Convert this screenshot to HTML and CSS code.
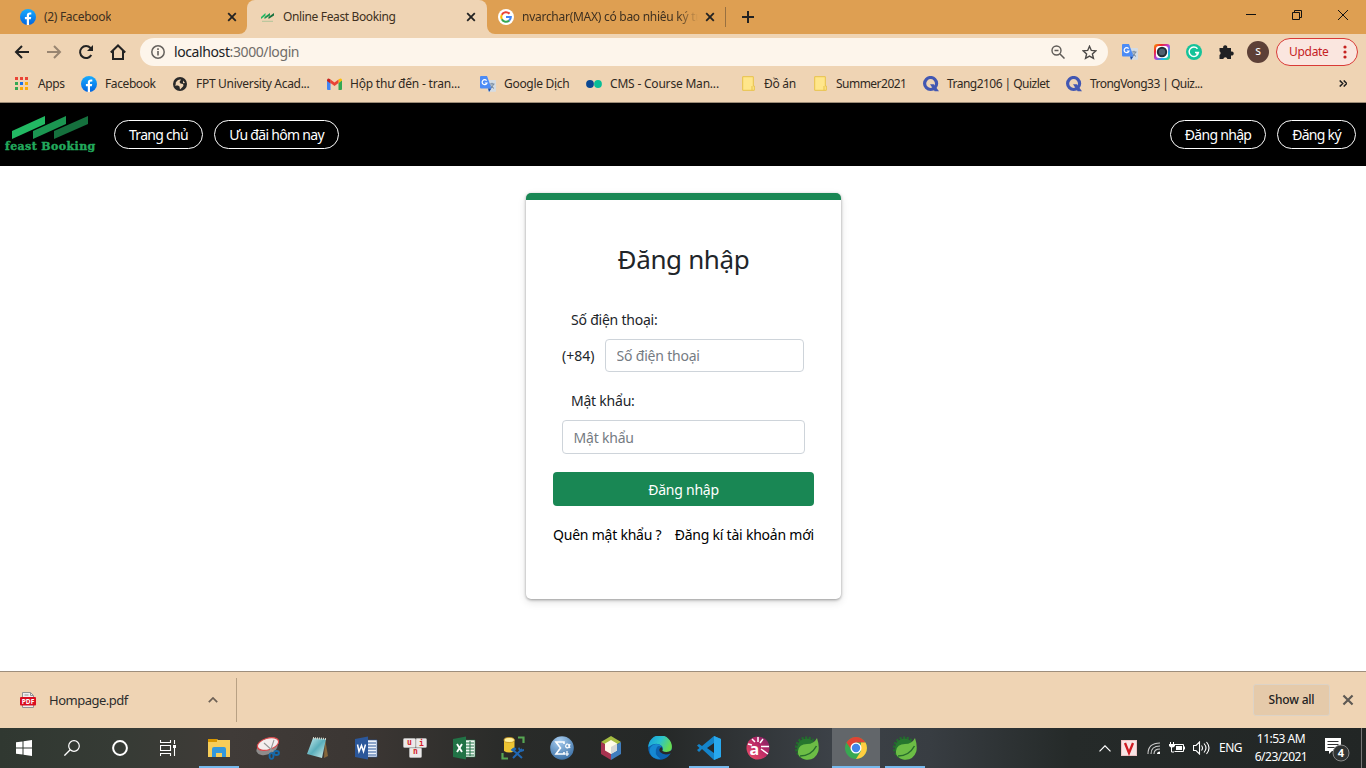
FILE: index.html
```html
<!DOCTYPE html>
<html lang="vi">
<head>
<meta charset="utf-8">
<title>Online Feast Booking</title>
<link rel="stylesheet" href="styles.css">
</head>
<body>
<svg class="defs" aria-hidden="true">
  <defs>
    <linearGradient id="fbg" x1="0" y1="0" x2="0" y2="1"><stop offset="0" stop-color="#18acfe"/><stop offset="1" stop-color="#0165e1"/></linearGradient>
    <linearGradient id="rain" x1="0" y1="0" x2="1" y2="1"><stop offset="0" stop-color="#f5a500"/><stop offset=".25" stop-color="#f6252f"/><stop offset=".5" stop-color="#b63bd8"/><stop offset=".75" stop-color="#18b8f0"/><stop offset="1" stop-color="#38de52"/></linearGradient>
    <linearGradient id="edge" x1="0" y1="0" x2="1" y2=".4"><stop offset="0" stop-color="#1499df"/><stop offset=".55" stop-color="#2bc3cd"/><stop offset="1" stop-color="#67dc52"/></linearGradient>
    <linearGradient id="pink" x1="0" y1="1" x2="1" y2="0"><stop offset="0" stop-color="#f15364"/><stop offset=".6" stop-color="#b62667"/><stop offset="1" stop-color="#712463"/></linearGradient>
    <linearGradient id="note" x1="0" y1="0" x2="1" y2="1"><stop offset="0" stop-color="#cceef0"/><stop offset=".5" stop-color="#5aaebb"/><stop offset="1" stop-color="#d8f1ee"/></linearGradient>
    <radialGradient id="sig" cx=".4" cy=".2" r=".9"><stop offset="0" stop-color="#a9cef0"/><stop offset="1" stop-color="#32689f"/></radialGradient>
    <symbol id="facebook" viewBox="0 0 16 16"><circle cx="8" cy="8" r="8" fill="url(#fbg)"/><path d="M6.8 16v-5.7H4.9V8h1.9V6.7c0-2.3 1.1-3.3 3.2-3.3l1.3.1v2h-1c-1 0-1.3.5-1.3 1.3V8h2.2l-.4 2.3H9V16z" fill="#fff"/></symbol>
    <symbol id="x" viewBox="0 0 10 10"><path d="M1.2 1.2l7.6 7.6M8.800 1.200L1.200 8.800" stroke="currentColor" stroke-width="1.8"/></symbol>
    <symbol id="mark" viewBox="0 0 76 24"><path d="M0 15L33 0v8L0 23z" fill="#22b963"/><path d="M21 15L54 0v8L21 23z" fill="#1b9651"/><path d="M42 15L76 0v8L42 23z" fill="#15703d"/></symbol>
    <symbol id="translate" viewBox="0 0 16 16"><path d="M6 4h9.300q.7 0 .7.700V15q0 .7-.7.700H8z" fill="#d5dce3"/><path d="M9.500 8h5M12 6.800V8m1.500 0q-.6 2.400-2.500 4m-.5-3q1 2 3.500 3.400" stroke="#71859b" fill="none"/><path d="M1 0h6l4.500 12.600H1q-1 0-1-1V1q0-1 1-1z" fill="#4c8bf5"/><path d="M8 12.600h3.400L9 16z" fill="#174ca8"/><path d="M6.600 4.600A2.500 2.500 0 1 0 7 7H4.800" fill="none" stroke="#fff" stroke-width="1.200"/></symbol>
    <symbol id="folder" viewBox="0 0 13 15"><path d="M.7.700h10.600v9.300h1v4.300H.7z" fill="#ffe68b" stroke="#e8c249"/><path d="M10 10v4.300" stroke="#e8c249"/></symbol>
    <symbol id="quizlet" viewBox="0 0 16 16"><circle cx="7.600" cy="7.500" r="6" fill="none" stroke="#4257b2" stroke-width="3.200"/><path d="M7 8.300h3.800l5.200 6.900h-4.300z" fill="#4257b2"/></symbol>
    <symbol id="spring" viewBox="0 0 24 24"><circle cx="11.500" cy="12" r="10.300" fill="none" stroke="#226d2d" stroke-width="2.600" stroke-dasharray="2.200 1.400"/><circle cx="11.500" cy="12" r="9.500" fill="#26762e"/><path d="M22 2q2.700 8 1.200 13.800Q20 25 10 23.500 2 21 3 15q1-7 9-7 7 0 10-6z" fill="#6cbd45"/><path d="M5 20q11 0 16.500-10" fill="none" stroke="#286e2d" stroke-width="1.500"/></symbol>
  </defs>
</svg>

<header class="tabs">
  <div class="tab tab-first"><svg class="i16"><use href="#facebook"/></svg><span class="tab-title t-fb">(2) Facebook</span><svg class="close"><use href="#x"/></svg></div>
  <div class="tab-shell"><div class="tab tab-active"><svg class="fav" viewBox="0 0 13 10"><path d="M0 5l4.500-4v2.500L0 7z" fill="#22b963"/><path d="M3.500 5L9 1v2.500L3.500 7z" fill="#1b9651"/><path d="M7.500 5L13 1v2.500L7.500 7z" fill="#15703d"/><path d="M1 9.300h11" stroke="#a8c295" stroke-width=".9"/></svg><span class="tab-title t-on">Online Feast Booking</span><svg class="close"><use href="#x"/></svg></div></div>
  <div class="tab-rest">
    <div class="tab tab-third"><svg class="i16" viewBox="0 0 16 16"><circle cx="8" cy="8" r="8" fill="#fff"/><g fill="none" stroke-width="2.100"><path d="M11.500 4.700A4.800 4.800 0 0 0 3.800 5.700" stroke="#ea4335"/><path d="M3.800 5.700a4.800 4.800 0 0 0 0 4.600" stroke="#fbbc05"/><path d="M3.800 10.300a4.800 4.800 0 0 0 7.300 1.300" stroke="#34a853"/><path d="M11.100 11.600A4.800 4.800 0 0 0 12.800 8H8" stroke="#4285f4"/></g></svg><span class="tab-title t-nv">nvarchar(MAX) có bao nhiêu ký tự</span><svg class="close"><use href="#x"/></svg></div>
    <svg class="newtab" viewBox="0 0 12 12"><path d="M6 0v12M0 6h12" stroke="#222" stroke-width="2"/></svg>
    <div class="winbtns"><svg viewBox="0 0 10 10"><path d="M0 4.500h10" stroke="#111"/></svg><svg viewBox="0 0 10 10"><path d="M.5 2.500h7v7h-7zM2.500 2V.5h7v7H8" fill="none" stroke="#111"/></svg><svg viewBox="0 0 10 10"><path d="M0 0l10 10M10 0L0 10" stroke="#111"/></svg></div>
  </div>
</header>

<div class="toolbar">
  <svg class="nav" viewBox="0 0 16 16"><path d="M15 8H2M8 2L2 8l6 6" fill="none" stroke="#222" stroke-width="2"/></svg>
  <svg class="nav" viewBox="0 0 16 16"><path d="M1 8h13M8 2l6 6-6 6" fill="none" stroke="#988571" stroke-width="2"/></svg>
  <svg class="nav" viewBox="0 0 16 16"><path d="M13.300 11A6 6 0 1 1 12.500 4L14 6" fill="none" stroke="#222" stroke-width="2"/><path d="M15 1v6H9z" fill="#222"/></svg>
  <svg class="nav" viewBox="0 0 16 16"><path d="M.8 8.500L8 1.500l7.200 7M3 7v8h10V7" fill="none" stroke="#222" stroke-width="2"/></svg>
  <div class="omnibox">
    <svg class="info" viewBox="0 0 14 14"><circle cx="7" cy="7" r="6.200" fill="none" stroke="#65615d" stroke-width="1.500"/><path d="M7 6v4.500M7 3.300v1.600" stroke="#65615d" stroke-width="1.600"/></svg>
    <span class="url">localhost<span>:3000/login</span></span>
    <svg class="mag" viewBox="0 0 14 14"><circle cx="5.500" cy="5.500" r="4.500" fill="none" stroke="#5f5b57" stroke-width="1.400"/><path d="M9 9l4.500 4.500M3.500 5.500h4" stroke="#5f5b57" stroke-width="1.500"/></svg>
    <svg class="star" viewBox="0 0 14 14"><path d="M7 1.200l1.700 3.900 4.200.4-3.200 2.800 1 4.200L7 10.300l-3.700 2.200 1-4.200L1.100 5.500l4.200-.4z" fill="none" stroke="#4c4947" stroke-width="1.300"/></svg>
  </div>
  <svg class="ext"><use href="#translate"/></svg>
  <svg class="ext" viewBox="0 0 16 16"><rect width="16" height="16" rx="3" fill="url(#rain)"/><rect x="2" y="2" width="12" height="12" rx="3" fill="#fff"/><circle cx="8" cy="8" r="5.200" fill="#222d36"/><circle cx="8" cy="8" r="3.200" fill="#4f6070"/></svg>
  <svg class="ext" viewBox="0 0 16 16"><circle cx="8" cy="8" r="8" fill="#15c39a"/><path d="M11.500 4.800A4.700 4.700 0 1 0 12.500 8.500H9M11 8.500v3" fill="none" stroke="#fff" stroke-width="1.400"/></svg>
  <svg class="ext" viewBox="0 0 16 16"><path d="M1.500 4h3.700a2.100 2.100 0 1 1 4 0H13v3.500a2.100 2.100 0 1 1 0 4V15H9.400a2.100 2.100 0 0 0-4.100 0H1.500v-4a2.100 2.100 0 0 0 0-3.700z" fill="#202124"/></svg>
  <span class="avatar">s</span>
  <div class="update"><span>Update</span><svg viewBox="0 0 4 14"><g fill="#c5221f"><circle cx="2" cy="2" r="1.600"/><circle cx="2" cy="7" r="1.600"/><circle cx="2" cy="12" r="1.600"/></g></svg></div>
</div>

<nav class="bookmarks">
  <div class="bm bm1"><svg viewBox="0 0 14 14" class="i14"><path d="M0 0h3v3H0zM5 0h3v3H5zM10 0h3v3h-3z" fill="#ea4335"/><path d="M0 5h3v3H0zM0 10h3v3H0z" fill="#34a853"/><path d="M5 5h3v3H5z" fill="#1a73e8"/><path d="M10 5h3v3h-3zM5 10h3v3H5zM10 10h3v3h-3z" fill="#fbab05"/></svg><span>Apps</span></div>
  <div class="bm bm2"><svg class="i16"><use href="#facebook"/></svg><span>Facebook</span></div>
  <div class="bm bm3"><svg class="i14" viewBox="0 0 14 14"><circle cx="7" cy="7" r="7" fill="#292929"/><path d="M3.500 4.500Q5 2 8 2.500L6.500 5l1 1.500 2.500.5q1 1 0 2.500L7 12.500l-.5-3L5 8.500H1.800L3 7l-.5-1zM10 3.500l2 2.500-2 .3z" fill="#efd4b4"/></svg><span>FPT University Acad...</span></div>
  <div class="bm bm4"><svg class="gm" viewBox="0 0 15 12"><path d="M0 2v9q0 1 1 1h2.500V5z" fill="#4285f4"/><path d="M15 2v9q0 1-1 1h-2.500V5z" fill="#34a853"/><path d="M11.500 5L15 2.500V1.700q-1-2-2.700-.8l-.8.6z" fill="#fbbc04"/><path d="M3.500 1.500l4 3 4-3V5l-4 3-4-3z" fill="#ea4335"/><path d="M0 1.700V3l3.500 2.500v-4l-.8-.6Q1 0 0 1.700" fill="#c5221f"/></svg><span>Hộp thư đến - tran...</span></div>
  <div class="bm bm5"><svg class="i16"><use href="#translate"/></svg><span>Google Dịch</span></div>
  <div class="bm bm6"><svg class="i16" viewBox="0 0 16 16"><circle cx="4" cy="8" r="3.900" fill="#0b4892"/><circle cx="12" cy="8" r="3.900" fill="#08bd98"/></svg><span>CMS - Course Man...</span></div>
  <div class="bm bm7"><svg class="fold"><use href="#folder"/></svg><span>Đồ án</span></div>
  <div class="bm bm8"><svg class="fold"><use href="#folder"/></svg><span>Summer2021</span></div>
  <div class="bm bm9"><svg class="i16"><use href="#quizlet"/></svg><span>Trang2106 | Quizlet</span></div>
  <div class="bm bm10"><svg class="i16"><use href="#quizlet"/></svg><span>TrongVong33 | Quiz...</span></div>
  <svg class="more" viewBox="0 0 8 7"><path d="M.7.5l3 3-3 3M4.700.5l3 3-3 3" fill="none" stroke="#222" stroke-width="1.600"/></svg>
</nav>

<div class="site-nav">
  <div class="brand"><svg><use href="#mark"/></svg><span>feast Booking</span></div>
  <a class="pill p1">Trang chủ</a><a class="pill p2">Ưu đãi hôm nay</a>
  <span class="grow"></span>
  <a class="pill p3">Đăng nhập</a><a class="pill p4">Đăng ký</a>
</div>

<main class="page">
  <form class="card">
    <h1>Đăng nhập</h1>
    <label class="l1">Số điện thoại:</label>
    <div class="phone"><span>(+84)</span><input type="text" placeholder="Số điện thoại"></div>
    <label class="l2">Mật khẩu:</label>
    <input class="pw" type="password" placeholder="Mật khẩu">
    <button type="button">Đăng nhập</button>
    <div class="links"><a class="k1">Quên mật khẩu ?</a><a class="k2">Đăng kí tài khoản mới</a></div>
  </form>
</main>

<div class="shelf">
  <div class="file"><svg class="pdf" viewBox="0 0 16 16"><path d="M2.500.5h8l3 3v12h-11z" fill="#eee" stroke="#929292"/><path d="M10.500.5v3h3M4.500 3h4" fill="none" stroke="#929292"/><rect y="5" width="16" height="8.500" rx="1" fill="#d90d20"/><text x="8" y="11.800" text-anchor="middle" class="pdft">PDF</text></svg><span>Hompage.pdf</span><svg class="up" viewBox="0 0 10 6"><path d="M.8 5.200L5 1l4.200 4.200" fill="none" stroke="#6c6055" stroke-width="1.700"/></svg></div>
  <button class="showall" type="button">Show all</button>
  <svg class="shelf-x"><use href="#x"/></svg>
</div>

<footer class="taskbar">
  <div class="sys"><svg width="16" height="16" viewBox="0 0 16 16"><path d="M0 2.300l6.500-.9v6H0zM7.500 1.200L16 0v7.400H7.500zM0 8.500h6.500v6.100L0 13.700zM7.500 8.500H16V16l-8.500-1.200z" fill="#fff"/></svg></div>
  <div class="sys"><svg width="16" height="16" viewBox="0 0 16 16"><circle cx="10" cy="6" r="5.300" fill="none" stroke="#fff" stroke-width="1.200"/><path d="M6.200 9.800L.4 15.600" stroke="#fff" stroke-width="1.300"/></svg></div>
  <div class="sys"><svg width="16" height="16" viewBox="0 0 16 16"><circle cx="8" cy="8" r="6.900" fill="none" stroke="#fff" stroke-width="2"/></svg></div>
  <div class="sys"><svg width="16" height="16" viewBox="0 0 16 16"><path d="M.5 0v2.500h10V0M.5 16v-2.500h10V16M.5 5.500h10v5H.5zM14.500 0v4M14.500 8v8" fill="none" stroke="#fff" stroke-width="1.100"/><path d="M13 5h3v3h-3z" fill="#fff"/></svg></div>
  <div class="app run first"><svg viewBox="0 0 24 24"><path d="M1 3h9l1 1h12v17H1z" fill="#f7cd58"/><path d="M1 3h9v3H1z" fill="#d99700"/><path d="M5 13q0-2 2-2h10q2 0 2 2v8h-4v-4H9v4H5z" fill="#3398dc"/></svg></div>
  <div class="app"><svg viewBox="0 0 24 24"><ellipse cx="11" cy="12" rx="11" ry="6.500" transform="rotate(-20 11 12)" fill="#8e8b8b"/><ellipse cx="12" cy="8" rx="11" ry="5.800" transform="rotate(-17 12 8)" fill="#f4eeee" stroke="#d8484b" stroke-width="1.200"/><path d="M8 7l10 9M18 4l-4 12" stroke="#999" stroke-width="1.100"/><g fill="none" stroke="#156aab" stroke-width="1.800"><ellipse cx="15.500" cy="20" rx="2" ry="2.800"/><ellipse cx="20.500" cy="17" rx="2.500" ry="2"/></g></svg></div>
  <div class="app"><svg viewBox="0 0 24 24"><path d="M20 3l3 17-4 2z" fill="#86663b"/><path d="M8 2l13 1-4 19-15-4z" fill="url(#note)"/><path d="M8 2l13 1" stroke="#d6d6ca" stroke-width="2" stroke-dasharray="1 1"/></svg></div>
  <div class="app"><svg viewBox="0 0 24 24"><path d="M12 4h11v17H12z" fill="#eef3fa" stroke="#2b579a" stroke-width=".6"/><path d="M14 7h8M14 10h8M14 13h8M14 16h8M14 19h8" stroke="#2b579a"/><path d="M1 3l13-2.500v23L1 21z" fill="#2b579a"/><path d="M3.500 8.500L5 15.500l2.500-6 2 6L11.500 8.500" fill="none" stroke="#fff" stroke-width="1.500"/></svg></div>
  <div class="app"><svg viewBox="0 0 24 24"><g fill="#ece9e9" stroke="#bbb" stroke-width=".7"><rect x=".5" y="2.500" width="12" height="9" rx="1"/><rect x="13" y="2.500" width="10.500" height="9" rx="1"/><rect x="6.500" y="12" width="12" height="9.500" rx="1"/></g><g class="uni"><text x="4" y="8.500">u</text><text x="16" y="9.500">i</text><text x="10" y="18">n</text></g></svg></div>
  <div class="app"><svg viewBox="0 0 24 24"><path d="M12 4h11v17H12z" fill="#eff8f1" stroke="#217346" stroke-width=".6"/><path d="M14 7h8M14 10h8M14 13h8M14 16h8M14 19h8M18 5v15" stroke="#217346"/><path d="M1 3l13-2.500v23L1 21z" fill="#217346"/><path d="M5 8l5 8M10 8l-5 8" stroke="#fff" stroke-width="1.900"/></svg></div>
  <div class="app"><svg viewBox="0 0 24 24"><path d="M3 4v11q5 3 10.500 0V4z" fill="#edc432"/><ellipse cx="8.200" cy="4" rx="5.200" ry="2.500" fill="#fff09a" stroke="#c59219" stroke-width=".8"/><path d="M17 1.500h5.500V7M1.500 17v5.500H7" fill="none" stroke="#57a653" stroke-width="2.200"/><path d="M11 13l10 9M21 13l-9 9" stroke="#2268b3" stroke-width="2"/><path d="M9.500 14l4-3 2 2-3 3zM18 11l2 3 3-1v2l-3 1-3-3z" fill="#2268b3"/></svg></div>
  <div class="app"><svg viewBox="0 0 24 24"><circle cx="12" cy="12" r="11.800" fill="url(#sig)"/><path d="M14 8V6H6l4.500 6L6 18h8v-2" fill="none" stroke="#fff" stroke-width="1.600"/><path d="M20 8q-1 4-3 4-2-1-1-3 2-3 4 3M14 18h5M17 15v5" fill="none" stroke="#fff" stroke-width="1.200"/></svg></div>
  <div class="app"><svg viewBox="0 0 24 24"><path d="M12 0l10 6-10 6L2 6z" fill="#a5bd42"/><path d="M2 6l10 6v12L2 18z" fill="#a73450"/><path d="M22 6v12l-10 6V12z" fill="#417dbd"/><path d="M12 4l6 3.500v7L12 18l-6-3.500v-7z" fill="#fffbe9"/><path d="M12 11l6-3.500v7L12 18z" fill="#d7d8d8"/></svg></div>
  <div class="app"><svg viewBox="0 0 24 24"><circle cx="12" cy="12" r="11.800" fill="#0c62af"/><path d="M.3 11A11.800 11.800 0 0 1 23.900 11q0 5-5.500 5.500-5 0-4.500-2 2-2 0-4.500Q8 5 .3 11z" fill="url(#edge)"/><path d="M9 11q-4 7 3.500 12Q4 23 2 17q-2-7 6-9 5 0 5 3-2-2-4 0z" fill="#1689d3"/><path d="M13.500 11q-3.500 2-1.500 5 4 4 10.500 1.500l1.500-.5v-3q-5 3.500-9.500 1 .8-1.500-1-4z" fill="#28282a"/></svg></div>
  <div class="app run"><svg viewBox="0 0 24 24"><path d="M17 0l7 3v18l-7 3L5 13l-3 3-2-2 2.500-2L0 9.500 2 8l3 2z" fill="#1484ca"/><path d="M17 0l7 3v18l-7 3z" fill="#28a8ed"/><path d="M17 7v10l-7-5z" fill="#25282a"/></svg></div>
  <div class="app"><svg viewBox="0 0 24 24"><circle cx="12" cy="12" r="11.500" fill="url(#pink)"/><path d="M12 1v5M6 3l3 3M17 3l-3 4M15 10.500h8M15 13l7 5M2 8l4 1" stroke="#fff" stroke-width="1.500"/><text x="3.500" y="19" class="art">a</text></svg></div>
  <div class="app"><svg><use href="#spring"/></svg></div>
  <div class="app current"><svg viewBox="0 0 24 24"><circle cx="12" cy="12" r="11" fill="#38a852"/><path d="M2.500 6.500A11 11 0 0 1 21.500 6.500H12L7.500 14z" fill="#df4335"/><path d="M21.500 6.500A11 11 0 0 1 12 23l5-8V6.500z" fill="#ffcd40"/><circle cx="12" cy="12" r="5.500" fill="#fff"/><circle cx="12" cy="12" r="4.200" fill="#4285e8"/></svg></div>
  <div class="app run"><svg><use href="#spring"/></svg></div>
  <div class="tray">
    <svg class="tchev" viewBox="0 0 12 7"><path d="M.5 6.300L6 .8l5.500 5.500" fill="none" stroke="#fff" stroke-width="1.200"/></svg>
    <svg class="tv" viewBox="0 0 16 16"><path d="M0 0h16v16H0z" fill="#eec3c3"/><path d="M1 1h14v14H1z" fill="#f8e5e5"/><path d="M4 3l4 10 4-10" fill="none" stroke="#cf1b22" stroke-width="2.300"/></svg>
    <svg class="twifi" viewBox="0 0 14 14"><g fill="none" stroke="#ccc" stroke-width="1.100"><path d="M1 13Q1 2 13 2"/><path d="M4 13Q4 5 13 5"/><path d="M7 13Q7 8 13 8"/></g><path d="M10 13q0-2.500 3-2.500V13z" fill="#fff"/></svg>
    <svg class="tbat" viewBox="0 0 16 12"><path d="M6 2.500h8.500v7H5.500M15.500 4.500v3M2.500 5v5H5M1.500 0v2M4.500 0v2" fill="none" stroke="#fff"/><path d="M0 2h6v2q-3 3-6 0zM7 4h6v4H7z" fill="#fff"/></svg>
    <svg class="tspk" viewBox="0 0 17 14"><path d="M.5 4.500h2.500L6.500 1v12L3 9.500H.5zM8.500 4.500q2 2.500 0 5M11 2.500q4 4.500 0 9M13.500 1q5 6 0 12" fill="none" stroke="#fff" stroke-width="1.100"/></svg>
    <span class="lang">ENG</span>
    <span class="clock"><span class="c1">11:53 AM</span><span class="c2">6/23/2021</span></span>
    <svg class="tnote" viewBox="0 0 25 24"><path d="M0 0h16v13H7l-3 3v-3H0z" fill="#fff"/><path d="M2.500 3.500h11M2.500 6.500h11M2.500 9.500h7" stroke="#333" stroke-width="1.100"/><circle cx="16" cy="15" r="8" fill="#303332" stroke="#888"/><text x="16" y="19" text-anchor="middle" class="cnt">4</text></svg>
  </div>
</footer>
</body>
</html>
```
FILE: styles.css
```css
* { box-sizing: border-box; }
body { margin: 0; width: 1366px; height: 768px; overflow: hidden; background: #fff; color: #212529; font: 12px/16px "Noto Sans", "Open Sans", sans-serif; display: flex; flex-direction: column; }
svg { display: block; flex: none; }
span, a, label { white-space: nowrap; }
.defs { position: absolute; width: 0; height: 0; }
.i16 { width: 16px; height: 16px; }
.i14 { width: 14px; height: 14px; }

.tabs { height: 34px; flex: none; display: flex; background: #efd4b4; color: #3e3020; }
.tab { height: 34px; display: flex; align-items: center; }
.tab-title { display: block; overflow: hidden; margin-left: 8px; }
.close { width: 10px; height: 10px; margin-left: auto; color: #222; }
.tab-first { width: 247px; padding: 0 10px 0 20px; background: #de9f52; border-radius: 0 0 8px 0; }
.tab-shell { width: 240px; background: #de9f52; }
.tab-active { padding: 0 11px 0 14px; background: #efd4b4; border-radius: 8px 8px 0 0; }
.fav { width: 13px; height: 10px; }
.t-on { margin-left: 9px; }
.tab-rest { flex: 1; display: flex; align-items: center; background: #de9f52; border-radius: 0 0 0 8px; }
.tab-third { width: 239px; height: 20px; padding: 0 10px 0 11px; border-right: 1px solid #987040; }
.t-nv { width: 176px; -webkit-mask-image: linear-gradient(90deg, #000 88%, transparent); mask-image: linear-gradient(90deg, #000 88%, transparent); }
.newtab { width: 12px; height: 12px; margin-left: 16px; }
.winbtns { display: flex; gap: 36px; margin: 0 18px 5px auto; }
.winbtns svg { width: 10px; height: 10px; }
.t-fb { letter-spacing: -.31px; }
.t-on { letter-spacing: -.36px; }
.t-nv { letter-spacing: -.27px; }

.toolbar { height: 34px; flex: none; display: flex; align-items: center; padding: 2px 8px 0 14px; background: #efd4b4; }
.nav { width: 16px; height: 16px; margin-right: 16px; }
.omnibox { width: 968px; height: 28px; margin-left: -2px; margin-right: 14px; padding: 0 11px; display: flex; align-items: center; background: #fdf5eb; border-radius: 14px; }
.info { width: 14px; height: 14px; }
.url { margin-left: 9px; font-size: 14px; line-height: 20px; letter-spacing: -.4px; color: #202124; }
.url span { color: #706c68; }
.mag { width: 14px; height: 14px; margin-left: auto; }
.star { width: 15px; height: 15px; margin-left: 17px; }
.ext { width: 16px; height: 16px; margin-right: 16px; }
.avatar { width: 22px; height: 22px; margin-left: -3px; border-radius: 50%; background: #5d4037; color: #fff; text-align: center; font-size: 12px; line-height: 20px; }
.update { width: 82px; height: 28px; margin-left: 7px; padding: 0 10px 0 12px; display: flex; align-items: center; justify-content: space-between; border: 1px solid #d93a36; border-radius: 14px; background: #fae6df; color: #c5221f; }
.update span { letter-spacing: -.3px; }
.update svg { width: 4px; height: 14px; }

.bookmarks { height: 35px; flex: none; display: flex; align-items: center; padding: 0 19px 3px 15px; background: #efd4b4; border-bottom: 1px solid #9c8b77; color: #30291f; }
.bm { display: flex; align-items: center; gap: 8px; }
.bm span { letter-spacing: -.3px; }
.bm1 { width: 66px; gap: 9px; }
.bm1 span, .bm2 span { letter-spacing: -.4px; }
.bm2 { width: 92px; }
.bm3 { width: 154px; gap: 9px; }
.bm4 { width: 153px; }
.bm4 span, .bm6 span { letter-spacing: -.2px; }
.bm5 { width: 106px; }
.bm6 { width: 156px; }
.bm7 { width: 72px; gap: 9px; }
.bm8 { width: 109px; gap: 9px; }
.bm8 span { letter-spacing: -.52px; }
.bm9 { width: 143px; }
.bm9 span, .bm10 span { letter-spacing: -.53px; }
.gm { width: 15px; height: 12px; }
.fold { width: 13px; height: 15px; }
.more { width: 8px; height: 7px; margin-left: auto; }

.site-nav { height: 63px; flex: none; display: flex; align-items: center; padding: 0 10px 0 5px; background: #000; }
.brand { width: 109px; display: flex; flex-direction: column; }
.brand svg { width: 76px; height: 24px; margin-left: 7px; }
.brand span { margin-top: 1px; font: bold 11px/12px "DejaVu Serif", serif; letter-spacing: .4px; color: #22a95c; -webkit-text-stroke: .4px #22a95c; }
.pill { height: 29px; display: flex; align-items: center; justify-content: center; border: 1px solid #fff; border-radius: 15px; color: #fff; font-size: 14px; letter-spacing: -.7px; }
.p1 { width: 89px; }
.p2 { width: 125px; margin-left: 11px; }
.p3 { width: 96px; }
.p4 { width: 79px; margin-left: 11px; }
.grow { flex: 1; }

.page { height: 505px; flex: none; padding-top: 27px; display: flex; justify-content: center; align-items: flex-start; }
.card { width: 315px; height: 406px; margin-left: 1px; padding: 43px 27px 0; display: flex; flex-direction: column; border-top: 7px solid #198754; border-radius: 5px; background: #fff; box-shadow: 0 1px 3px rgba(0,0,0,.35), 0 3px 9px rgba(0,0,0,.12); font-size: 14px; line-height: 20px; letter-spacing: -.22px; }
.card h1 { margin: 0; text-align: center; font-size: 26px; line-height: 32px; font-weight: 400; letter-spacing: -.35px; }
.card label { margin-left: 18px; }
.l1 { margin-top: 35px; }
.phone { margin: 9px 10px 0 9px; display: flex; align-items: center; justify-content: space-between; }
.phone span { letter-spacing: 0; }
.card input { height: 34px; padding: 0 10.5px; border: 1px solid #ced4da; border-radius: 4px; font: 14px "Noto Sans", sans-serif; letter-spacing: -.2px; background: #fff; }
.card input::placeholder { color: #757b82; opacity: 1; }
.phone input { width: 199px; height: 33px; }
.l2 { margin-top: 19px; }
.pw { width: 243px; margin: 9px 0 0 9px; }
.card button { height: 34px; margin-top: 18px; padding: 1px 0 0; border: 0; border-radius: 4px; background: #198754; color: #fff; font: 14px "Noto Sans", sans-serif; letter-spacing: -.25px; }
.links { margin-top: 19px; display: flex; justify-content: space-between; color: #000; }

.shelf { height: 57px; flex: none; display: flex; align-items: center; padding: 0 12px 0 0; border-top: 1px solid #9e8e7c; background: #efd4b4; }
.file { width: 237px; height: 44px; padding: 0 18px 0 20px; display: flex; align-items: center; border-right: 1px solid #b8a184; color: #2c2c2c; font-size: 13px; }
.file span { margin-left: 13px; letter-spacing: -.5px; }
.pdf { width: 16px; height: 16px; }
.pdft { font: bold 6.5px "Open Sans", sans-serif; fill: #fff; }
.up { width: 10px; height: 6px; margin-left: auto; }
.showall { width: 77px; height: 32px; margin-left: auto; padding: 0 0 2px; border: 1px solid #ddd3c6; border-radius: 3px; background: #e5caaa; color: #222; font: 500 12px "Noto Sans", sans-serif; letter-spacing: -.2px; }
.shelf-x { width: 12px; height: 12px; margin-left: 12px; color: #5e5953; }

.taskbar { height: 40px; flex: none; display: flex; background: linear-gradient(90deg, #303831 0, #363b35 120px, #403b38 230px, #3b3633 370px, #292b29 510px, #252827 660px, #3c4147 830px, #383d42 930px, #252a29 1070px, #222625 100%); color: #fff; }
.sys { width: 48px; display: flex; align-items: center; justify-content: center; }
.app { width: 49px; display: flex; align-items: center; justify-content: center; }
.first { margin-left: 2px; }
.app svg { width: 24px; height: 24px; }
.run { background: linear-gradient(#76b9ed, #76b9ed) 50% 100% / 40px 2px no-repeat; }
.current { width: 48px; margin-left: 1px; background: linear-gradient(#76b9ed, #76b9ed) 0 100% / 100% 2px no-repeat, #62666a; }
.uni { font: bold 8px "DejaVu Sans Mono", monospace; fill: #d51e27; }
.art { font: bold 16px "Open Sans", sans-serif; fill: #fff; }
.tray { margin-left: auto; width: 267px; display: flex; align-items: center; background: linear-gradient(#777, #777) 262px 0 / 1px 100% no-repeat; }
.tchev { width: 12px; height: 7px; }
.tv { width: 16px; height: 16px; margin-left: 10px; }
.twifi { width: 14px; height: 14px; margin-left: 10px; }
.tbat { width: 16px; height: 12px; margin-left: 8px; }
.tspk { width: 17px; height: 14px; margin-left: 8px; }
.lang { margin-left: 9px; width: 25px; letter-spacing: -.5px; }
.clock { width: 74px; display: flex; flex-direction: column; align-items: center; line-height: 18px; letter-spacing: -.5px; }
.tnote { width: 25px; height: 24px; margin: 4px 0 0 7px; }
.cnt { font: bold 11px "Open Sans", sans-serif; fill: #fff; }
```
